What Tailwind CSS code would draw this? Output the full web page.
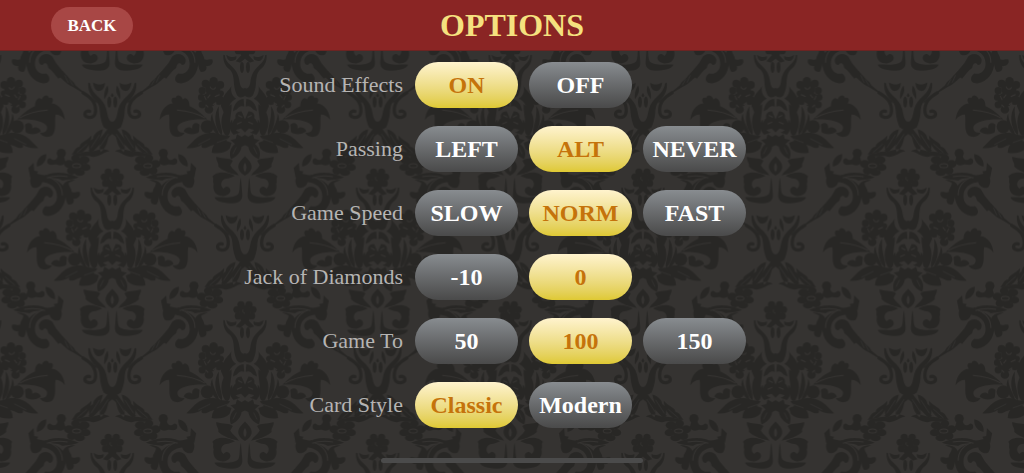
<!DOCTYPE html>
<html lang="en">
<head>
<meta charset="utf-8">
<meta name="viewport" content="width=device-width, initial-scale=1">
<title>Options</title>
<script src="https://cdn.jsdelivr.net/npm/@tailwindcss/browser@4"></script>
</head>
<body class="flex min-h-screen flex-col bg-[#353331] font-['Liberation_Serif',serif]">
<header class="grid grid-cols-[1fr_auto_1fr] items-center border-b border-[#6b2422] bg-[#8a2524] px-[51px] pt-[7px] pb-[6px]">
  <button type="button" class="h-[37px] w-[82px] rounded-full bg-[#a84745] text-[17px] font-bold text-white">BACK</button>
  <h1 class="pb-0.5 text-[32px] leading-8 font-bold text-[#f5e17f]">OPTIONS</h1>
</header>
<main class="relative isolate flex-1 overflow-hidden">
  <!-- Damask wallpaper: one half figure, mirrored, repeated with a half drop -->
  <svg class="absolute inset-0 -z-10 h-full w-full" aria-hidden="true">
    <defs>
      <g id="half">
        <!-- upper tulip -->
        <path d="M22 98C32 106 46 104 58 97C56 115 48 124 38 123C28 122 22 112 22 98Z"/>
        <path d="M72 97C74 120 66 138 50 152C40 162 38 172 37 190C36 205 30 222 26 232C16 240 8 238 0 252V215C8 215 12 205 15 190C18 172 24 158 36 146C52 132 64 118 66 100Z"/>
        <path d="M14 106C10 118 10 130 24 148C26 132 22 116 14 106ZM0 128L5 138L0 142Z"/>
        <ellipse cx="9" cy="156" rx="6" ry="17"/>
        <path d="M88 128C64 142 50 156 50 182C50 200 62 204 72 202C88 198 84 180 68 184" fill="none" stroke="#282725" stroke-width="10" stroke-linecap="round"/>
        <!-- rope -->
        <path d="M46 154L88 124L110 106C116 94 124 90 130 84C136 74 142 72 150 62L164 74C158 84 150 86 146 92C138 98 134 104 120 110C96 124 70 140 46 160Z"/>
        <path d="M118 106L128 88M132 98L142 76" stroke="#353331" stroke-width="2"/>
        <!-- leaf spray -->
        <path d="M0 232L12 234L38 268L72 302L62 310L30 276L0 252Z"/>
        <path d="M2 246C18 262 8 284 34 306C44 288 36 262 2 246ZM28 238C32 256 40 284 66 306C74 290 70 272 58 266C56 252 44 242 28 238ZM62 256C64 280 74 300 96 310L122 314C112 302 112 292 98 290C96 276 80 276 62 256ZM8 304C26 292 48 300 62 306C84 300 100 312 118 314C96 326 74 314 62 320C40 324 30 308 8 304Z"/>
        <path d="M12 252L38 292M38 254L64 294M76 282L106 308" stroke="#353331" stroke-width="2"/>
        <!-- side blossom -->
        <ellipse cx="84" cy="330" rx="16" ry="12"/><ellipse cx="110" cy="325" rx="13" ry="12"/><ellipse cx="130" cy="342" rx="15" ry="12"/><ellipse cx="122" cy="362" rx="14" ry="12"/><ellipse cx="98" cy="368" rx="16" ry="10"/><ellipse cx="80" cy="352" rx="15" ry="11"/>
        <ellipse cx="107" cy="347" rx="22" ry="16"/>
        <ellipse cx="107" cy="347" rx="12" ry="6" fill="none" stroke="#353331" stroke-width="3"/>
        <!-- buds along the top of the scroll -->
        <circle cx="153" cy="310" r="14"/>
        <path d="M146 316L164 318C166 330 176 334 184 326C192 320 200 334 192 342C184 348 174 342 166 344C154 350 144 344 140 336ZM198 312C214 314 230 330 226 350C212 348 196 336 198 312ZM236 338L252 354L246 384C236 378 226 374 222 364L234 362Z"/>
        <!-- acanthus scroll -->
        <path d="M100 382C130 370 160 364 190 372C205 380 215 372 230 370C250 374 250 400 240 412C228 418 212 410 210 396C195 384 170 380 150 392C140 388 120 390 100 382Z"/>
        <path d="M200 384C170 384 142 400 140 432C138 462 158 494 190 498C214 500 214 478 200 468C182 474 166 460 166 440C166 414 184 398 216 396Z"/>
        <path d="M178 425C186 405 214 406 222 424C232 444 244 452 258 472L236 484C226 474 220 462 206 452C204 438 196 434 190 442C182 446 176 436 178 425Z"/>
        <path d="M110 390C130 388 146 396 150 410C140 428 142 448 134 462C122 468 112 458 116 446C104 448 92 438 98 426C108 424 114 430 122 426C120 416 134 406 130 398Z"/>
        <path d="M190 382C164 392 150 410 150 436M134 380C156 376 180 378 196 384" fill="none" stroke="#353331" stroke-width="3"/>
        <!-- crowning flower -->
        <circle cx="0" cy="385" r="17"/><circle cx="12" cy="366" r="11"/><circle cx="24" cy="381" r="11"/><circle cx="20" cy="400" r="11"/><circle cx="4" cy="407" r="10"/>
        <path d="M0 392C6 392 8 386 6 381" fill="none" stroke="#353331" stroke-width="2"/>
        <!-- lower tulip -->
        <path d="M65 412C66 432 60 446 46 456C36 466 34 480 33 500C32 516 28 524 24 534C14 544 6 540 0 536V512C8 516 14 510 16 494C18 474 26 460 36 450C50 438 60 428 60 414ZM26 416C36 422 46 418 56 412C54 428 44 434 36 430C28 430 24 424 26 416ZM0 408L10 412L28 432L14 436L0 424Z"/>
        <ellipse cx="9" cy="450" rx="6" ry="17"/>
        <!-- carnation -->
        <circle cx="94" cy="492" r="13"/><circle cx="74" cy="503" r="12"/><circle cx="118" cy="499" r="12"/><circle cx="128" cy="520" r="11"/><circle cx="96" cy="514" r="23"/><circle cx="131" cy="540" r="10"/><circle cx="72" cy="528" r="9"/><circle cx="78" cy="548" r="15"/><circle cx="108" cy="548" r="22"/><circle cx="128" cy="562" r="11"/><circle cx="108" cy="576" r="13"/>
        <path d="M88 510C92 518 102 518 104 508M76 532L90 538M104 532L112 542M122 536L116 548M86 556L96 562M118 562L110 570" fill="none" stroke="#353331" stroke-width="3"/>
        <path d="M40 502C42 518 68 526 72 566L60 594C46 572 48 554 26 544C44 532 42 516 40 502Z"/>
        <!-- heart of the bouquet -->
        <path d="M4 545C20 546 34 560 36 582L24 576C16 564 8 566 2 568ZM40 560C74 580 78 622 60 652C48 664 40 640 44 620C46 600 38 580 40 560ZM78 566C94 586 94 630 70 654C62 640 82 610 78 566ZM98 588C108 606 104 640 76 656C82 630 96 620 98 588Z"/>
        <path d="M0 606L10 582C22 580 32 590 28 602C40 612 42 630 28 638L12 634L0 646ZM38 606C50 616 48 640 34 652L14 646C32 640 38 626 38 606Z"/>
        <path d="M8 600L20 594M10 614L24 620" stroke="#353331" stroke-width="3"/>
        <!-- plume -->
        <path d="M112 606C130 590 140 578 166 566C166 550 176 536 186 546C192 532 206 530 208 542C220 536 224 550 216 558C240 560 254 584 256 608C246 596 238 592 228 592C224 610 232 640 218 654C204 664 186 658 180 646C196 648 204 640 202 628C196 612 160 604 112 606Z"/>
        <path d="M136 622C150 612 160 620 158 634C166 626 180 630 184 642C170 654 146 652 138 644Z"/><circle cx="113" cy="628" r="20"/>
        <path d="M120 602C146 586 176 580 204 578" fill="none" stroke="#353331" stroke-width="3"/>
        <!-- lower leaves -->
        <path d="M70 652C100 640 130 648 150 666L176 692C156 694 140 690 130 682C134 696 116 694 104 686L92 682C100 692 98 700 100 706C80 710 58 706 46 694L40 676L56 670L44 656Z"/>
        <path d="M0 652L10 658L24 650L28 664L44 668L30 680C46 692 48 710 42 726C24 718 12 704 10 688L0 684Z"/>
        <path d="M50 664L84 676M26 690L36 710M104 664L140 682" stroke="#353331" stroke-width="2"/>
        <!-- base: bud, leaves and boat -->
        <path d="M0 716C10 728 22 736 20 752C16 768 6 770 0 776V764C6 756 6 744 0 736Z"/>
        <path d="M36 730C48 720 60 726 86 718C88 730 78 736 80 748C68 758 56 766 18 774C26 762 38 756 44 744Z"/>
        <path d="M30 776C54 760 88 762 98 778C92 784 98 792 94 800C98 820 88 834 72 836C56 838 40 828 44 816C48 806 58 806 64 814C76 806 72 786 56 784C46 784 40 780 30 776ZM12 780C18 796 14 816 20 830C36 846 70 838 92 840C86 854 60 858 36 858C16 858 6 848 8 830Z"/>
      </g>
      <g id="figure"><use href="#half"/><use href="#half" transform="scale(-1 1)"/></g>
      <pattern id="damask" width="796" height="796" patternUnits="userSpaceOnUse" patternTransform="translate(112.3 -1) scale(.3333)">
        <g fill="#282725">
          <use href="#figure"/><use href="#figure" x="796"/><use href="#figure" y="-796"/><use href="#figure" x="796" y="-796"/><use href="#figure" x="398" y="-398"/><use href="#figure" x="398" y="398"/>
        </g>
      </pattern>
    </defs>
    <rect width="100%" height="100%" fill="url(#damask)"/>
  </svg>

  <div class="grid grid-cols-[calc(50%-109px)_1fr] items-center gap-x-3 gap-y-[18px] pt-[11px] pb-11 text-[24px] font-bold text-white">
    <span id="sound" class="pb-0.5 text-right text-[22px] font-normal text-[#b5b4b3]">Sound Effects</span>
    <div role="group" aria-labelledby="sound" class="flex gap-[11px]">
      <button type="button" aria-pressed="true" class="h-[46px] w-[103px] rounded-full bg-linear-to-b from-[#fff3cd] to-[#dfc932] text-[#c5730b]">ON</button>
      <button type="button" aria-pressed="false" class="h-[46px] w-[103px] rounded-full bg-linear-to-b from-[#888c90] to-[#4a4a4a]">OFF</button>
    </div>
    <span id="passing" class="pb-0.5 text-right text-[22px] font-normal text-[#b5b4b3]">Passing</span>
    <div role="group" aria-labelledby="passing" class="flex gap-[11px]">
      <button type="button" aria-pressed="false" class="h-[46px] w-[103px] rounded-full bg-linear-to-b from-[#888c90] to-[#4a4a4a]">LEFT</button>
      <button type="button" aria-pressed="true" class="h-[46px] w-[103px] rounded-full bg-linear-to-b from-[#fff3cd] to-[#dfc932] text-[#c5730b]">ALT</button>
      <button type="button" aria-pressed="false" class="h-[46px] w-[103px] rounded-full bg-linear-to-b from-[#888c90] to-[#4a4a4a]">NEVER</button>
    </div>
    <span id="speed" class="pb-0.5 text-right text-[22px] font-normal text-[#b5b4b3]">Game Speed</span>
    <div role="group" aria-labelledby="speed" class="flex gap-[11px]">
      <button type="button" aria-pressed="false" class="h-[46px] w-[103px] rounded-full bg-linear-to-b from-[#888c90] to-[#4a4a4a]">SLOW</button>
      <button type="button" aria-pressed="true" class="h-[46px] w-[103px] rounded-full bg-linear-to-b from-[#fff3cd] to-[#dfc932] text-[#c5730b]">NORM</button>
      <button type="button" aria-pressed="false" class="h-[46px] w-[103px] rounded-full bg-linear-to-b from-[#888c90] to-[#4a4a4a]">FAST</button>
    </div>
    <span id="jack" class="pb-0.5 text-right text-[22px] font-normal text-[#b5b4b3]">Jack of Diamonds</span>
    <div role="group" aria-labelledby="jack" class="flex gap-[11px]">
      <button type="button" aria-pressed="false" class="h-[46px] w-[103px] rounded-full bg-linear-to-b from-[#888c90] to-[#4a4a4a]">-10</button>
      <button type="button" aria-pressed="true" class="h-[46px] w-[103px] rounded-full bg-linear-to-b from-[#fff3cd] to-[#dfc932] text-[#c5730b]">0</button>
    </div>
    <span id="gameto" class="pb-0.5 text-right text-[22px] font-normal text-[#b5b4b3]">Game To</span>
    <div role="group" aria-labelledby="gameto" class="flex gap-[11px]">
      <button type="button" aria-pressed="false" class="h-[46px] w-[103px] rounded-full bg-linear-to-b from-[#888c90] to-[#4a4a4a]">50</button>
      <button type="button" aria-pressed="true" class="h-[46px] w-[103px] rounded-full bg-linear-to-b from-[#fff3cd] to-[#dfc932] text-[#c5730b]">100</button>
      <button type="button" aria-pressed="false" class="h-[46px] w-[103px] rounded-full bg-linear-to-b from-[#888c90] to-[#4a4a4a]">150</button>
    </div>
    <span id="cards" class="pb-0.5 text-right text-[22px] font-normal text-[#b5b4b3]">Card Style</span>
    <div role="group" aria-labelledby="cards" class="flex gap-[11px]">
      <button type="button" aria-pressed="true" class="h-[46px] w-[103px] rounded-full bg-linear-to-b from-[#fff3cd] to-[#dfc932] text-[#c5730b]">Classic</button>
      <button type="button" aria-pressed="false" class="h-[46px] w-[103px] rounded-full bg-linear-to-b from-[#888c90] to-[#4a4a4a]">Modern</button>
    </div>
  </div>
  <div class="absolute bottom-[10px] left-1/2 h-[5px] w-[262px] -translate-x-1/2 rounded-full bg-[#4b4b4b]"></div>
</main>
</body>
</html>
